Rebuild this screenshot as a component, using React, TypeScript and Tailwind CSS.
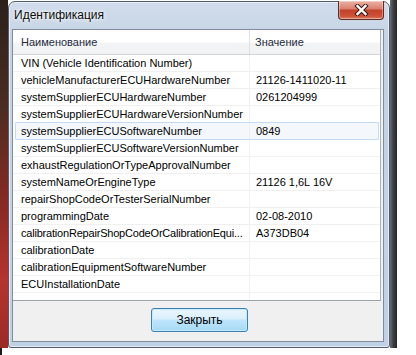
import React from 'react';

type Row = { name: string; value: string; selected?: boolean; tight?: boolean };

const ROWS: Row[] = [
    { name: 'VIN (Vehicle Identification Number)', value: '' },
    { name: 'vehicleManufacturerECUHardwareNumber', value: '21126-1411020-11' },
    { name: 'systemSupplierECUHardwareNumber', value: '0261204999' },
    { name: 'systemSupplierECUHardwareVersionNumber', value: '' },
    { name: 'systemSupplierECUSoftwareNumber', value: '0849', selected: true },
    { name: 'systemSupplierECUSoftwareVersionNumber', value: '' },
    { name: 'exhaustRegulationOrTypeApprovalNumber', value: '' },
    { name: 'systemNameOrEngineType', value: '21126 1,6L 16V' },
    { name: 'repairShopCodeOrTesterSerialNumber', value: '' },
    { name: 'programmingDate', value: '02-08-2010' },
    { name: 'calibrationRepairShopCodeOrCalibrationEqui...', value: 'A373DB04', tight: true },
    { name: 'calibrationDate', value: '' },
    { name: 'calibrationEquipmentSoftwareNumber', value: '' },
    { name: 'ECUInstallationDate', value: '' },
];

const CloseButton: React.FC = () => (
    <div className="w-[46px] h-[19px] rounded-b-[4px] border border-t-0 border-[#5e2a24] bg-[linear-gradient(180deg,#ebb2a4_0%,#da8270_42%,#c4412a_52%,#cc5238_85%,#de8466_100%)] flex items-center justify-center shadow-[inset_0_0_0_1px_rgba(255,255,255,0.35)]">
        <svg width="15" height="12" viewBox="0 0 15 12">
            <path d="M3.5 2 L11.5 10 M11.5 2 L3.5 10" stroke="#3b1d1a" strokeWidth="4.4" strokeLinecap="square" />
            <path d="M3.5 2 L11.5 10 M11.5 2 L3.5 10" stroke="#ffffff" strokeWidth="2.4" strokeLinecap="square" />
        </svg>
    </div>
);

const ListRow: React.FC<{ row: Row }> = ({ row }) => (
    <div className="relative flex h-[17px] border-b border-[#f0f0f0]">
        {row.selected && (
            <div className="absolute left-[2px] right-[1px] -top-px bottom-[-1px] rounded-[2px] border border-[#c3daf3] bg-[#f4f8fd]" />
        )}
        <div
            className={
                row.tight
                    ? 'relative w-[237px] shrink-0 border-r border-[#f0f0f0] pl-[8px] pt-px leading-[15px] whitespace-nowrap overflow-hidden tracking-[-0.2px]'
                    : 'relative w-[237px] shrink-0 border-r border-[#f0f0f0] pl-[8px] pt-px leading-[15px] whitespace-nowrap overflow-hidden'
            }
        >
            {row.name}
        </div>
        <div className="relative flex-1 pl-[6px] pt-px leading-[15px] whitespace-nowrap overflow-hidden">
            {row.value}
        </div>
    </div>
);

export default function App() {
    return (
        <div className="w-[416px] h-[355px] bg-white overflow-hidden flex flex-col font-['Liberation_Sans',Arial,sans-serif] text-[11px] text-black">
            <div className="flex h-[348px] shrink-0">
                {/* desktop behind, left */}
                <div className="w-[8px] shrink-0 bg-[linear-gradient(180deg,#2b211b_0%,#4a2c22_30%,#8a2a24_60%,#b5342e_80%,#9a2b27_100%)]" />

                {/* window */}
                <div className="w-[382px] shrink-0 flex flex-col pt-px">
                    <div className="flex-1 flex flex-col rounded-t-[7px] rounded-b-[3px] border border-[#4f5d6e] bg-[linear-gradient(180deg,#d0dceb_0%,#c3d3e4_12%,#bfd1e4_100%)] shadow-[inset_0_0_0_1px_rgba(255,255,255,0.55)]">
                        <div className="h-[27px] shrink-0 flex items-start justify-between pl-[5px] pr-[5px]">
                            <div className="pt-[6px] text-[12px] leading-[15px] text-[#0b0b0b] [text-shadow:0_0_6px_#ffffff,0_0_3px_#ffffff]">
                                Идентификация
                            </div>
                            <div className="-mt-px">
                                <CloseButton />
                            </div>
                        </div>

                        <div className="flex-1 flex flex-col ml-[3px] mr-[5px] mb-[5px] border border-[#7f8c9c] bg-[#f0f0f0]">
                            {/* list */}
                            <div className="h-[271px] shrink-0 w-[368px] bg-white border-r border-[#a9b2bd] border-b border-b-[#9aa3ad] flex flex-col overflow-hidden">
                                <div className="h-[25px] shrink-0 flex border-b border-[#d5d5d5] bg-[linear-gradient(180deg,#ffffff_0%,#ffffff_50%,#f3f4f5_55%,#f1f2f4_100%)] text-[#1e2a3d]">
                                    <div className="w-[237px] shrink-0 border-r border-[#dee0e3] pl-[8px] leading-[25px]">
                                        Наименование
                                    </div>
                                    <div className="flex-1 pl-[5px] leading-[25px]">Значение</div>
                                </div>
                                {ROWS.map(r => (
                                    <ListRow key={r.name} row={r} />
                                ))}
                                <div className="flex flex-1">
                                    <div className="w-[237px] shrink-0 border-r border-[#f0f0f0]" />
                                </div>
                            </div>

                            {/* bottom panel */}
                            <div className="flex-1 flex items-start pt-[7px] pl-[138px]">
                                <button
                                    type="button"
                                    className="w-[97px] h-[24px] rounded-[3px] border border-[#3c7fb1] bg-[linear-gradient(180deg,#eaf6fd_0%,#d9f0fc_45%,#bee6fd_50%,#a7d9f5_100%)] shadow-[inset_0_0_0_1px_#c6eafc] text-[12px] text-black leading-[22px]"
                                >
                                    Закрыть
                                </button>
                            </div>
                        </div>
                    </div>
                </div>

                {/* desktop behind, right */}
                <div className="w-[7px] shrink-0 bg-[linear-gradient(90deg,#6a6e73_0%,#3a3d40_50%,#25272a_100%)]" />
                <div className="flex-1 bg-white" />
            </div>
            <div className="flex-1 flex bg-white">
                <div className="w-[2px] bg-[#1c1c1c]" />
            </div>
        </div>
    );
}
